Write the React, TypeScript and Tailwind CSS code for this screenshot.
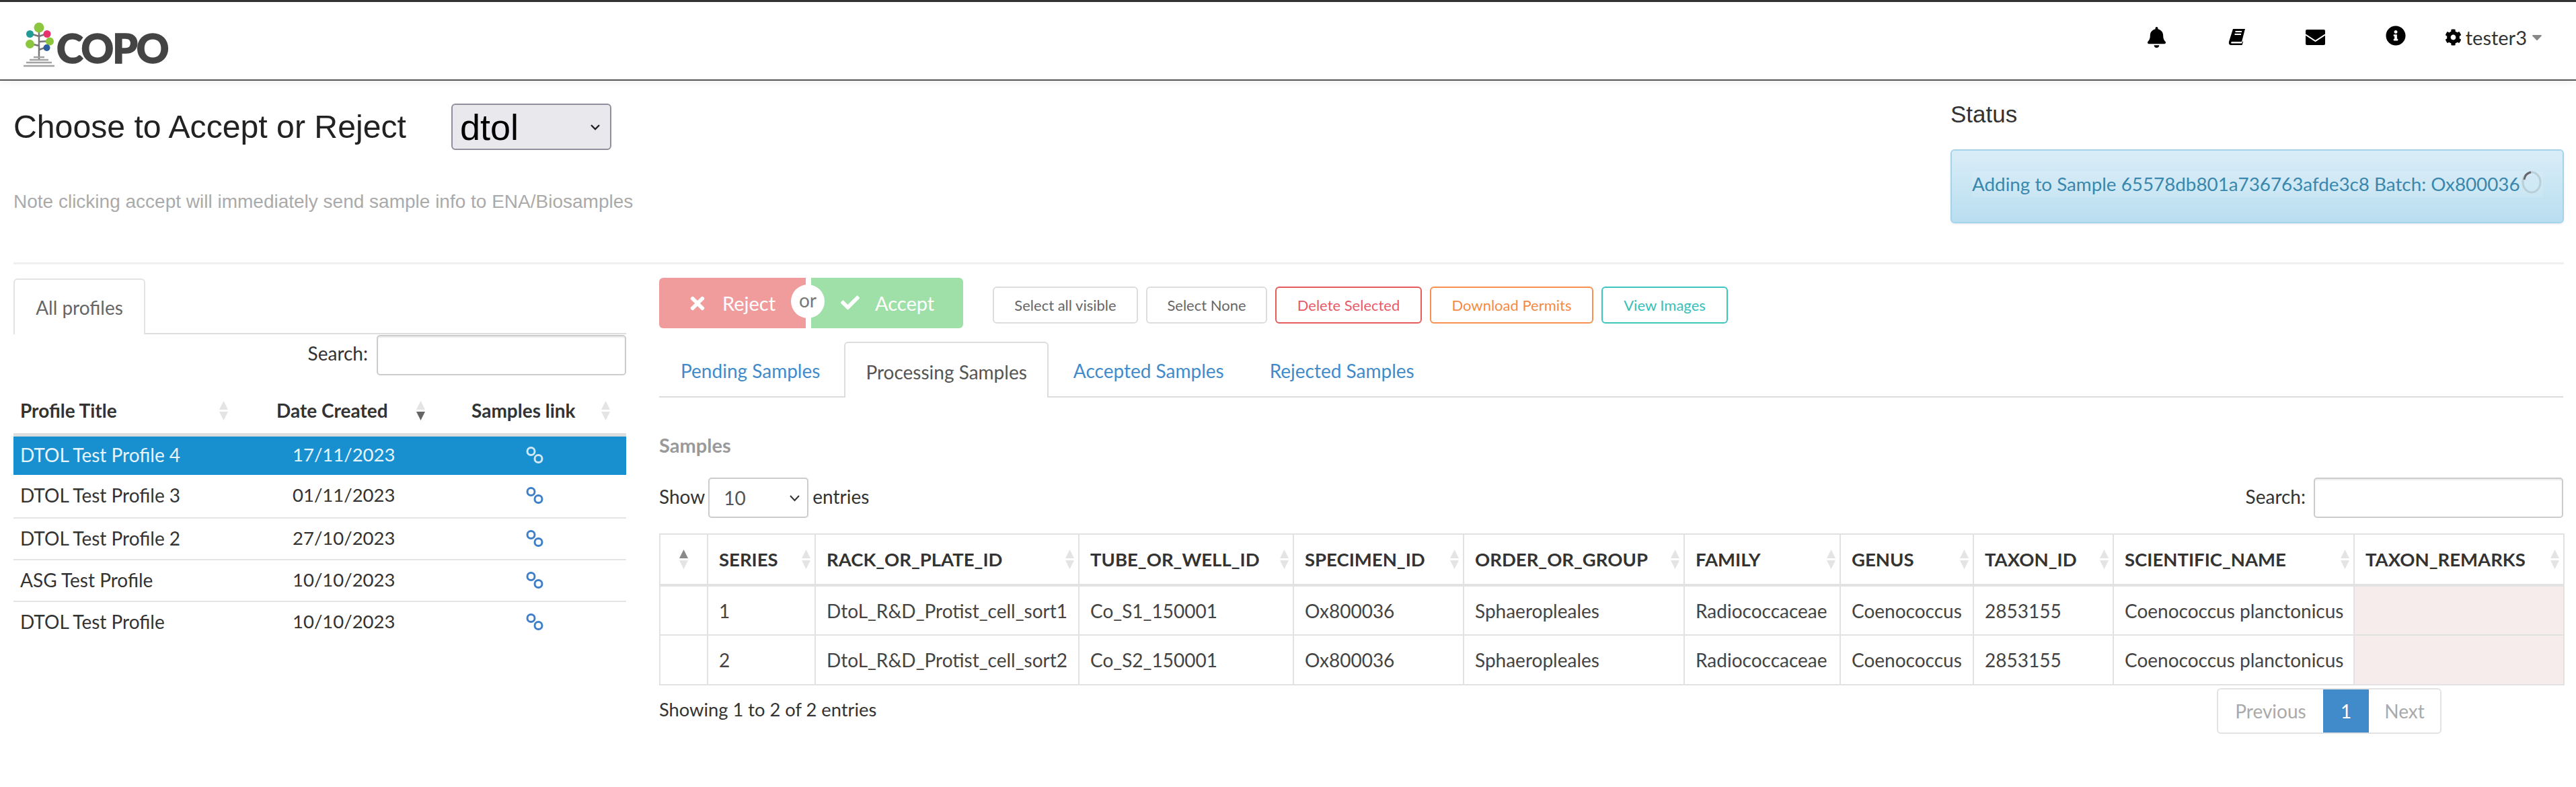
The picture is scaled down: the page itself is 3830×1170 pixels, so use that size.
import React from "react";
import { FaBell, FaCog, FaInfoCircle, FaTimes, FaCheck, FaCaretDown } from "react-icons/fa";

const lato = "font-['Lato','Liberation_Sans',sans-serif]";

function Sort({ active }: { active?: "up" | "down" }) {
  return (
    <span className="flex flex-col items-center gap-[3px] shrink-0">
      <svg width="13" height="13" viewBox="0 0 13 13"><path d="M6.5 0L13 13H0z" fill={active === "up" ? "#8a8a8a" : "#e4e4e4"} /></svg>
      <svg width="13" height="13" viewBox="0 0 13 13"><path d="M0 0H13L6.5 13z" fill={active === "down" ? "#666" : "#e4e4e4"} /></svg>
    </span>
  );
}

function Logo() {
  return (
    <div className="flex items-center ml-[34px] mt-[3px]">
      <svg width="50" height="72" viewBox="0 0 50 72" className="shrink-0">
        <path d="M24 8V58M24 22L11 18M24 22L36 18M24 36L11 33M24 30L40 29M24 42L35 38" stroke="#777" strokeWidth="2.5" fill="none" />
        <circle cx="24" cy="9" r="7.5" fill="#8cc63f" />
        <circle cx="10.5" cy="18.5" r="5.5" fill="#1f9c98" />
        <circle cx="36" cy="18.5" r="5.5" fill="#e8326e" />
        <circle cx="10.5" cy="33.5" r="6.5" fill="#8cc63f" />
        <circle cx="40" cy="29.5" r="6" fill="#8cc63f" />
        <circle cx="35.5" cy="39" r="5" fill="#2a5ea0" />
        <path d="M16 53H32M10 57H38M5 61H43M1 66H47" stroke="#a3a3a3" strokeWidth="2.5" fill="none" />
      </svg>
      <span className="font-['Lato',sans-serif] font-black text-[60px] leading-none text-[#444] tracking-[-2px] mt-[6px] [-webkit-text-stroke:1.5px_#444]">COPO</span>
    </div>
  );
}

function BookIcon() {
  return (
    <svg width="26" height="26" viewBox="0 0 26 26">
      <path d="M7 1H25L20 20H5.5C4 20 3.6 22.6 5.3 22.6H20L21.5 19L22 20.5L20.5 25H4C1 25 .5 22 1 20z" fill="#000" />
      <path d="M10.5 5H20M9.5 9H19" stroke="#fff" strokeWidth="2" />
    </svg>
  );
}

function MailIcon() {
  return (
    <svg width="29" height="23" viewBox="0 0 29 23">
      <rect width="29" height="23" rx="2" fill="#000" />
      <path d="M0 7.5L14.5 17L29 7.5" stroke="#fff" strokeWidth="2" fill="none" />
    </svg>
  );
}

function ChainIcon({ color }: { color: string }) {
  return (
    <svg width="26" height="26" viewBox="0 0 26 26">
      <circle cx="7.5" cy="8" r="5.5" fill="none" stroke={color} strokeWidth="3" />
      <circle cx="18.5" cy="19" r="5.5" fill="none" stroke={color} strokeWidth="3" />
    </svg>
  );
}

function NavBar() {
  return (
    <header className="h-[120px] border-t-[3px] border-t-[#333] border-b-[2px] border-b-[#555] flex items-start justify-between bg-white shadow-[0_3px_10px_rgba(0,0,0,0.06)]">
      <div className="pt-[26px]"><Logo /></div>
      <div className={`flex items-center h-[104px] pr-[46px] text-black ${lato}`}>
        <FaBell className="text-[31px]" />
        <span className="w-[91px]" />
        <BookIcon />
        <span className="w-[89px]" />
        <MailIcon />
        <span className="w-[90px]" />
        <FaInfoCircle className="text-[30px] -mt-[4px]" />
        <span className="w-[58px]" />
        <FaCog className="text-[25px]" />
        <span className="text-[29px] leading-none text-[#333] ml-[6px]">tester3</span>
        <FaCaretDown className="text-[24px] text-[#888] ml-[3px]" />
      </div>
    </header>
  );
}

function TopRow() {
  return (
    <section className="flex justify-between h-[273px] ml-[20px] mr-[18px] border-b-[3px] border-[#efefef]">
      <div className="pt-[34px] font-['Liberation_Sans',sans-serif]">
        <div className="flex items-center">
          <h1 className="text-[48.2px] leading-[69px] text-[#222] w-[651px]">Choose to Accept or Reject</h1>
          <div className="w-[238px] h-[69px] rounded-[6px] border-[2px] border-[#8f8f9d] bg-[#e9e9ed] flex items-center justify-between pl-[11px] pr-[14px]">
            <span className="text-[54px] text-black leading-none">dtol</span>
            <svg width="16" height="10" viewBox="0 0 16 10"><path d="M2 2L8 8L14 2" stroke="#222" strokeWidth="2.4" fill="none" /></svg>
          </div>
        </div>
        <p className="text-[28px] leading-[34px] text-[#aaa] mt-[60px]">Note clicking accept will immediately send sample info to ENA/Biosamples</p>
      </div>
      <div className="w-[912px] pt-[30px]">
        <h2 className="font-['Liberation_Sans',sans-serif] text-[35px] leading-[40px] text-[#333]">Status</h2>
        <div className="mt-[32px] h-[110px] rounded-[6px] border-[2px] border-[#a3d4ec] bg-gradient-to-b from-[#d9edf7] to-[#b9def0] shadow-[0_1px_3px_rgba(0,0,0,0.1)] pl-[30px] pt-[31px]">
          <div className={`flex items-center ${lato} text-[#3a87ad] text-[27.8px] leading-[38px] w-[849px] bg-white/10`}>
            <span>Adding to Sample 65578db801a736763afde3c8 Batch: Ox800036</span>
            <svg width="32" height="36" viewBox="0 0 32 36" className="ml-[1px] -mt-[6px] shrink-0">
              <ellipse cx="16" cy="18" rx="13" ry="15" fill="none" stroke="#b9cfd8" strokeWidth="3" />
              <path d="M5 14C6 8 10 4 15 3" fill="none" stroke="#666" strokeWidth="3" />
            </svg>
          </div>
        </div>
      </div>
    </section>
  );
}

const profiles = [
  ["DTOL Test Profile 4", "17/11/2023"],
  ["DTOL Test Profile 3", "01/11/2023"],
  ["DTOL Test Profile 2", "27/10/2023"],
  ["ASG Test Profile", "10/10/2023"],
  ["DTOL Test Profile", "10/10/2023"],
];

function rowClass(i: number) {
  if (i === 0) return "h-[60px] bg-[#1890d0] text-[#e8f4fb]";
  if (i === 1) return "h-[64px] border-b-[2px] border-[#e5e5e5] text-[#333]";
  if (i === 4) return "h-[62px] text-[#333]";
  return "h-[62px] border-b-[2px] border-[#e5e5e5] text-[#333]";
}

function Profiles() {
  return (
    <aside className={`w-[911px] shrink-0 pt-[21px] ${lato}`}>
      <div className="border-b-[2px] border-[#ddd] h-[83px]">
        <div className="w-[196px] h-[83px] border-[2px] border-b-0 border-[#e3e3e3] bg-white rounded-t-[6px] flex items-center justify-center text-[28px] text-[#666]">All profiles</div>
      </div>
      <div className="flex justify-end items-center mt-[1px] h-[60px]">
        <label className="text-[28px] text-[#333] mr-[13px] -mt-[6px]">Search:</label>
        <div className="w-[371px] h-[60px] border-[2px] border-[#ccc] rounded-[5px] shadow-[inset_0_2px_2px_rgba(0,0,0,0.08)]" />
      </div>
      <table className="w-full table-fixed border-collapse mt-[22px] text-[28px]">
        <colgroup><col className="w-[370px]" /><col className="w-[300px]" /><col /></colgroup>
        <thead>
          <tr className="h-[66px] border-b-[5px] border-[#ddd] text-[#333]">
            <th className="font-bold text-left pl-[10px] pr-[51px] pb-[3px]"><div className="flex justify-between items-center">Profile Title<Sort /></div></th>
            <th className="font-bold text-left pl-[21px] pr-[58px] pb-[3px]"><div className="flex justify-between items-center">Date Created<Sort active="down" /></div></th>
            <th className="font-bold text-left pl-[11px] pr-[24px] pb-[3px]"><div className="flex justify-between items-center">Samples link<Sort /></div></th>
          </tr>
        </thead>
        <tbody>
          {profiles.map(([name, date], i) => (
            <tr key={name + i} className={rowClass(i)}>
              <td className="pl-[10px] pb-[3px]">{name}</td>
              <td className="pl-[45px] pb-[3px] text-[27.5px]">{date}</td>
              <td className="pl-[92px] pb-[3px]"><ChainIcon color={i === 0 ? "#cfe7f6" : "#3f7fc9"} /></td>
            </tr>
          ))}
        </tbody>
      </table>
    </aside>
  );
}

function Chip({ label, cls, w }: { label: string; cls: string; w: string }) {
  return <span className={`h-[55px] flex items-center justify-center rounded-[6px] border-[2px] text-[22px] ${w} ${cls}`}>{label}</span>;
}

function Actions() {
  return (
    <div className="flex items-center">
      <div className="relative flex items-center text-white text-[29px]">
        <div className="w-[218px] h-[75px] bg-[#f09c9c] rounded-l-[6px] flex items-center pl-[42px]">
          <FaTimes className="text-[30px]" />
          <span className="ml-[22px]">Reject</span>
        </div>
        <div className="w-[226px] ml-[8px] h-[75px] bg-[#9fe0a9] rounded-r-[6px] flex items-center pl-[44px]">
          <FaCheck className="text-[28px] -mt-[2px]" />
          <span className="ml-[23px]">Accept</span>
        </div>
        <div className="absolute left-[196px] top-[10px] w-[50px] h-[50px] rounded-full bg-white flex items-center justify-center text-[#777] text-[28px] pb-[4px]">or</div>
      </div>
      <div className="flex items-center gap-[12px] ml-[44px] mt-[6px]">
        <Chip label="Select all visible" w="w-[216px]" cls="border-[#ddd] text-[#666]" />
        <Chip label="Select None" w="w-[180px]" cls="border-[#ddd] text-[#666]" />
        <Chip label="Delete Selected" w="w-[218px]" cls="border-[#e85a5a] text-[#e75a68]" />
        <Chip label="Download Permits" w="w-[243px]" cls="border-[#f79050] text-[#f58a45]" />
        <Chip label="View Images" w="w-[188px]" cls="border-[#3cc6bf] text-[#36bfb8]" />
      </div>
    </div>
  );
}

function Tabs() {
  return (
    <nav className="flex h-[83px] mt-[20px] border-b-[2px] border-[#ddd] text-[28px]">
      <a className="flex items-center pt-[4px] text-[#428bca] pl-[32px] pr-[36px]">Pending Samples</a>
      <a className="flex items-center pt-[4px] text-[#555] px-[30px] h-[83px] border-[2px] border-b-0 border-[#ddd] bg-white rounded-t-[6px]">Processing Samples</a>
      <a className="flex items-center pt-[4px] text-[#428bca] pl-[37px] pr-[32px]">Accepted Samples</a>
      <a className="flex items-center pt-[4px] text-[#428bca] pl-[36px]">Rejected Samples</a>
    </nav>
  );
}

const cols = [
  ["", 71],
  ["SERIES", 160],
  ["RACK_OR_PLATE_ID", 392],
  ["TUBE_OR_WELL_ID", 319],
  ["SPECIMEN_ID", 253],
  ["ORDER_OR_GROUP", 328],
  ["FAMILY", 232],
  ["GENUS", 198],
  ["TAXON_ID", 208],
  ["SCIENTIFIC_NAME", 358],
  ["TAXON_REMARKS", 312],
] as const;

const rows = [
  ["1", "DtoL_R&D_Protist_cell_sort1", "Co_S1_150001", "Ox800036", "Sphaeropleales", "Radiococcaceae", "Coenococcus", "2853155", "Coenococcus planctonicus"],
  ["2", "DtoL_R&D_Protist_cell_sort2", "Co_S2_150001", "Ox800036", "Sphaeropleales", "Radiococcaceae", "Coenococcus", "2853155", "Coenococcus planctonicus"],
];

function Samples() {
  return (
    <div>
      <h3 className="text-[#999] text-[29px] font-bold leading-[30px] mt-[56px]">Samples</h3>
      <div className="flex justify-between items-center h-[60px] mt-[33px]">
        <div className="flex items-center text-[28px] text-[#333]">
          <span className="-mt-[4px]">Show</span>
          <div className="w-[149px] h-[60px] ml-[5px] mr-[6px] border-[2px] border-[#ccc] rounded-[5px] flex items-center justify-between pl-[21px] pr-[10px] text-[#555]">
            <span>10</span>
            <svg width="17" height="11" viewBox="0 0 17 11"><path d="M2 2L8.5 9L15 2" stroke="#333" strokeWidth="2" fill="none" /></svg>
          </div>
          <span className="-mt-[4px]">entries</span>
        </div>
        <div className="flex items-center text-[28px] text-[#333]">
          <span className="mr-[12px] -mt-[4px]">Search:</span>
          <div className="w-[371px] h-[60px] border-[2px] border-[#ccc] rounded-[5px] shadow-[inset_0_2px_2px_rgba(0,0,0,0.08)]" />
        </div>
      </div>
      <table className="table-fixed border-collapse mt-[23px] w-[2831px] text-[28px]">
        <colgroup>{cols.map(([n, w], i) => <col key={i} style={{ width: w }} />)}</colgroup>
        <thead>
          <tr className="h-[76px]">
            {cols.map(([n], i) => (
              <th key={i} className="border-[2px] border-[#e2e2e2] border-b-[4px] font-bold text-[27.5px] text-[#333] text-left pl-[16px] pr-[6px]">
                <div className={`flex items-center ${i === 0 ? "justify-center -ml-[10px]" : "justify-between"}`}>{n}<Sort active={i === 0 ? "up" : undefined} /></div>
              </th>
            ))}
          </tr>
        </thead>
        <tbody>
          {rows.map((r) => (
            <tr key={r[0]} className="h-[74px] text-[#444]">
              <td className="border-[2px] border-[#e2e2e2]" />
              {r.map((c, i) => <td key={i} className="border-[2px] border-[#e2e2e2] pl-[16px] whitespace-nowrap overflow-hidden">{c}</td>)}
              <td className="border-[2px] border-[#e2e2e2] bg-[#f5eceb]" />
            </tr>
          ))}
        </tbody>
      </table>
      <div className="flex justify-between items-start mt-[4px]">
        <span className="text-[27.3px] text-[#333] mt-[12px]">Showing 1 to 2 of 2 entries</span>
        <div className="flex h-[68px] mr-[181px] border-[2px] border-[#e3e3e3] rounded-[6px] text-[28px] text-[#aaa] items-stretch">
          <span className="w-[156px] flex items-center justify-center">Previous</span>
          <span className="w-[68px] bg-[#428bca] text-white flex items-center justify-center">1</span>
          <span className="w-[106px] flex items-center justify-center">Next</span>
        </div>
      </div>
    </div>
  );
}

export default function App() {
  return (
    <div className="w-[3830px] h-[1170px] bg-white overflow-hidden">
      <NavBar />
      <TopRow />
      <main className={`flex pl-[20px] pr-[19px] gap-[49px] ${lato}`}>
        <Profiles />
        <div className="flex-1 min-w-0 pt-[20px]">
          <Actions />
          <Tabs />
          <Samples />
        </div>
      </main>
    </div>
  );
}
